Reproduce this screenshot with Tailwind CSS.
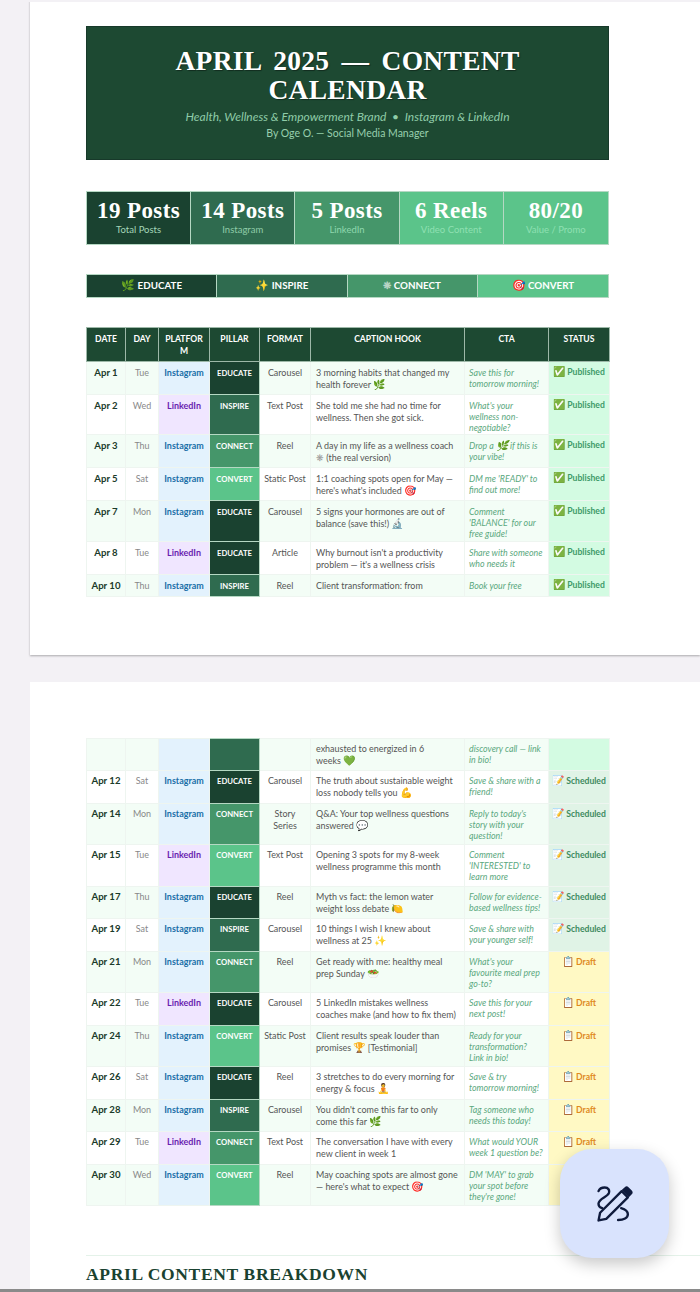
<!DOCTYPE html>
<html lang="en">
<head>
<meta charset="utf-8">
<title>April 2025 Content Calendar</title>
<script src="https://cdn.jsdelivr.net/npm/@tailwindcss/browser@4"></script>
</head>
<body class="relative w-[700px] h-[1292px] overflow-hidden bg-[#f3f1f5] font-['Lato','Noto_Sans',sans-serif]">

<!-- page 1 -->
<section class="ml-[30px] h-[655px] bg-white pl-[56px] pt-[26px] shadow-[0_1px_2px_rgba(0,0,0,0.3)]">
    <header class="w-[523px] h-[134px] bg-[#1d4932] border border-[#17392a] px-8 pt-[19px] text-center">
        <h1 class="font-['Liberation_Serif',serif] font-bold text-[27.5px] leading-[29px] tracking-[0.3px] [word-spacing:5px] text-white [text-shadow:1px_1px_1px_rgba(0,0,0,0.4)]">APRIL 2025 — CONTENT CALENDAR</h1>
        <p class="mt-[5px] text-[12px] leading-[16px] italic text-[#8fcca8]">Health, Wellness &amp; Empowerment Brand &nbsp;•&nbsp; Instagram &amp; LinkedIn</p>
        <p class="text-[10.5px] leading-[16px] text-[#98cfae]">By Oge O. — Social Media Manager</p>
    </header>

    <div class="mt-[31px] w-[523px] h-[54px] grid grid-cols-5 border border-[#b5d8c3] divide-x divide-[#b5d8c3] text-center text-white">
        <div class="bg-[#1a4230] pt-[6px]">
            <p class="font-['Liberation_Serif',serif] font-bold text-[23px] leading-[25px] tracking-[0.4px]">19 Posts</p>
            <p class="text-[9.5px] leading-[13px] text-[#a5d6b9]">Total Posts</p>
        </div>
        <div class="bg-[#2f6b4f] pt-[6px]">
            <p class="font-['Liberation_Serif',serif] font-bold text-[23px] leading-[25px] tracking-[0.4px]">14 Posts</p>
            <p class="text-[9.5px] leading-[13px] text-[#8fcca8]">Instagram</p>
        </div>
        <div class="bg-[#45966a] pt-[6px]">
            <p class="font-['Liberation_Serif',serif] font-bold text-[23px] leading-[25px] tracking-[0.4px]">5 Posts</p>
            <p class="text-[9.5px] leading-[13px] text-[#8fd8ae]">LinkedIn</p>
        </div>
        <div class="bg-[#5bc48a] pt-[6px]">
            <p class="font-['Liberation_Serif',serif] font-bold text-[23px] leading-[25px] tracking-[0.4px]">6 Reels</p>
            <p class="text-[9.5px] leading-[13px] text-[#8fe0b2]">Video Content</p>
        </div>
        <div class="bg-[#5bc48a] pt-[6px]">
            <p class="font-['Liberation_Serif',serif] font-bold text-[23px] leading-[25px] tracking-[0.4px]">80/20</p>
            <p class="text-[9.5px] leading-[13px] text-[#8fe0b2]">Value / Promo</p>
        </div>
    </div>

    <div class="mt-[29px] w-[523px] h-[24px] grid grid-cols-4 border border-[#b5d8c3] divide-x divide-[#b5d8c3] text-center text-white text-[9.8px] leading-[21px] font-bold">
        <div class="bg-[#1a4230]"><span class="text-[11px] leading-none">🌿</span> EDUCATE</div>
        <div class="bg-[#2f6b4f]"><span class="text-[11px] leading-none">✨</span> INSPIRE</div>
        <div class="bg-[#45966a]"><span class="text-[#b9d4c5]">❋</span> CONNECT</div>
        <div class="bg-[#5bc48a]"><span class="text-[11px] leading-none">🎯</span> CONVERT</div>
    </div>

    <table class="mt-[29px] w-[523px] table-fixed border-collapse text-[8.95px] leading-[12px] text-[#555] [&_th]:border [&_th]:border-[#9db8a8] [&_th]:bg-[#1d4932] [&_th]:text-white [&_th]:font-bold [&_th]:align-top [&_th]:pt-[5px] [&_th]:px-[1px] [&_th]:text-[8.6px] [&_th]:leading-[12px] [&_td]:border [&_td]:border-[#eef5f0] [&_td]:align-top [&_td]:pt-[5px] [&_td]:px-[5px] [&_td:nth-child(1)]:font-bold [&_td:nth-child(1)]:text-center [&_td:nth-child(1)]:px-0 [&_td:nth-child(1)]:text-[9.6px] [&_td:nth-child(1)]:text-[#1a3a2a] [&_td:nth-child(2)]:text-center [&_td:nth-child(2)]:px-0 [&_td:nth-child(2)]:text-[#888] [&_td:nth-child(3)]:font-bold [&_td:nth-child(3)]:text-center [&_td:nth-child(3)]:px-0 [&_td:nth-child(4)]:font-bold [&_td:nth-child(4)]:text-center [&_td:nth-child(4)]:px-0 [&_td:nth-child(4)]:text-white [&_td:nth-child(4)]:text-[7.7px] [&_td:nth-child(4)]:border-[#b5d8c3] [&_td:nth-child(5)]:text-center [&_td:nth-child(5)]:px-0 [&_td:nth-child(7)]:italic [&_td:nth-child(7)]:text-[8.8px] [&_td:nth-child(7)]:leading-[11px] [&_td:nth-child(7)]:text-[#5aa87e] [&_td:nth-child(7)]:px-[4px] [&_td:nth-child(8)]:font-bold [&_td:nth-child(8)]:px-0 [&_td:nth-child(8)]:pt-[4px] [&_td:nth-child(8)]:text-center [&_td:nth-child(8)]:text-[8.6px] [&_td:nth-child(8)]:whitespace-nowrap">
        <colgroup>
            <col class="w-[39px]"><col class="w-[33px]"><col class="w-[51px]"><col class="w-[50px]"><col class="w-[51px]"><col class="w-[154px]"><col class="w-[84px]"><col class="w-[61px]">
        </colgroup>
        <thead>
            <tr class="h-[34px]"><th>DATE</th><th>DAY</th><th>PLATFOR<br>M</th><th>PILLAR</th><th>FORMAT</th><th>CAPTION HOOK</th><th>CTA</th><th>STATUS</th></tr>
        </thead>
        <tbody>
            <tr class="h-[33px] bg-[#f3fdf6]"><td>Apr 1</td><td>Tue</td><td class="bg-[#e3f2fd] text-[#1a6fa8]">Instagram</td><td class="bg-[#1a4230]">EDUCATE</td><td>Carousel</td><td>3 morning habits that changed my health forever <span class="text-[10px] leading-none">🌿</span></td><td>Save this for tomorrow morning!</td><td class="bg-[#d3fbe2] text-[#3d9a68]"><span class="text-[10px] leading-none">✅</span> Published</td></tr>
            <tr class="h-[40px] bg-white"><td>Apr 2</td><td>Wed</td><td class="bg-[#f0e6ff] text-[#6a1fb0]">LinkedIn</td><td class="bg-[#2f6b4f]">INSPIRE</td><td>Text Post</td><td>She told me she had no time for wellness. Then she got sick.</td><td>What's your wellness non-negotiable?</td><td class="bg-[#d3fbe2] text-[#3d9a68]"><span class="text-[10px] leading-none">✅</span> Published</td></tr>
            <tr class="h-[33px] bg-[#f3fdf6]"><td>Apr 3</td><td>Thu</td><td class="bg-[#e3f2fd] text-[#1a6fa8]">Instagram</td><td class="bg-[#45966a]">CONNECT</td><td>Reel</td><td>A day in my life as a wellness coach <span class="text-[#999]">❋</span> (the real version)</td><td>Drop a <span class="text-[10px] leading-none">🌿</span> if this is your vibe!</td><td class="bg-[#d3fbe2] text-[#3d9a68]"><span class="text-[10px] leading-none">✅</span> Published</td></tr>
            <tr class="h-[33px] bg-white"><td>Apr 5</td><td>Sat</td><td class="bg-[#e3f2fd] text-[#1a6fa8]">Instagram</td><td class="bg-[#5bc48a]">CONVERT</td><td>Static Post</td><td>1:1 coaching spots open for May — here's what's included <span class="text-[10px] leading-none">🎯</span></td><td>DM me 'READY' to find out more!</td><td class="bg-[#d3fbe2] text-[#3d9a68]"><span class="text-[10px] leading-none">✅</span> Published</td></tr>
            <tr class="h-[41px] bg-[#f3fdf6]"><td>Apr 7</td><td>Mon</td><td class="bg-[#e3f2fd] text-[#1a6fa8]">Instagram</td><td class="bg-[#1a4230]">EDUCATE</td><td>Carousel</td><td>5 signs your hormones are out of balance (save this!) <span class="text-[10px] leading-none">🔬</span></td><td>Comment 'BALANCE' for our free guide!</td><td class="bg-[#d3fbe2] text-[#3d9a68]"><span class="text-[10px] leading-none">✅</span> Published</td></tr>
            <tr class="h-[33px] bg-white"><td>Apr 8</td><td>Tue</td><td class="bg-[#f0e6ff] text-[#6a1fb0]">LinkedIn</td><td class="bg-[#1a4230]">EDUCATE</td><td>Article</td><td>Why burnout isn't a productivity problem — it's a wellness crisis</td><td>Share with someone who needs it</td><td class="bg-[#d3fbe2] text-[#3d9a68]"><span class="text-[10px] leading-none">✅</span> Published</td></tr>
            <tr class="h-[22px] bg-[#f3fdf6]"><td>Apr 10</td><td>Thu</td><td class="bg-[#e3f2fd] text-[#1a6fa8]">Instagram</td><td class="bg-[#2f6b4f]">INSPIRE</td><td>Reel</td><td>Client transformation: from</td><td>Book your free</td><td class="bg-[#d3fbe2] text-[#3d9a68]"><span class="text-[10px] leading-none">✅</span> Published</td></tr>
        </tbody>
    </table>
</section>

<!-- page 2 -->
<section class="ml-[30px] mt-[27px] h-[607px] bg-white pl-[56px] pt-[56px]">
    <table class="w-[523px] table-fixed border-collapse text-[8.95px] leading-[12px] text-[#555] [&_td]:border [&_td]:border-[#eef5f0] [&_td]:align-top [&_td]:pt-[4px] [&_td]:px-[5px] [&_td:nth-child(1)]:font-bold [&_td:nth-child(1)]:text-center [&_td:nth-child(1)]:px-0 [&_td:nth-child(1)]:text-[9.6px] [&_td:nth-child(1)]:text-[#1a3a2a] [&_td:nth-child(2)]:text-center [&_td:nth-child(2)]:px-0 [&_td:nth-child(2)]:text-[#888] [&_td:nth-child(3)]:font-bold [&_td:nth-child(3)]:text-center [&_td:nth-child(3)]:px-0 [&_td:nth-child(4)]:font-bold [&_td:nth-child(4)]:text-center [&_td:nth-child(4)]:px-0 [&_td:nth-child(4)]:text-white [&_td:nth-child(4)]:text-[7.7px] [&_td:nth-child(4)]:border-[#b5d8c3] [&_td:nth-child(5)]:text-center [&_td:nth-child(5)]:px-0 [&_td:nth-child(7)]:italic [&_td:nth-child(7)]:text-[8.8px] [&_td:nth-child(7)]:leading-[11px] [&_td:nth-child(7)]:text-[#5aa87e] [&_td:nth-child(7)]:px-[4px] [&_td:nth-child(8)]:font-bold [&_td:nth-child(8)]:px-0 [&_td:nth-child(8)]:text-center [&_td:nth-child(8)]:text-[8.6px] [&_td:nth-child(8)]:whitespace-nowrap">
        <colgroup>
            <col class="w-[39px]"><col class="w-[33px]"><col class="w-[51px]"><col class="w-[50px]"><col class="w-[51px]"><col class="w-[154px]"><col class="w-[84px]"><col class="w-[61px]">
        </colgroup>
        <tbody>
            <tr class="h-[32px] bg-[#f3fdf6]"><td></td><td></td><td class="bg-[#e3f2fd]"></td><td class="bg-[#2f6b4f]"></td><td></td><td>exhausted to energized in 6<br>weeks <span class="text-[10px] leading-none">💚</span></td><td>discovery call — link in bio!</td><td class="bg-[#d3fbe2]"></td></tr>
            <tr class="h-[33px] bg-white"><td>Apr 12</td><td>Sat</td><td class="bg-[#e3f2fd] text-[#1a6fa8]">Instagram</td><td class="bg-[#1a4230]">EDUCATE</td><td>Carousel</td><td>The truth about sustainable weight loss nobody tells you <span class="text-[10px] leading-none">💪</span></td><td>Save &amp; share with a friend!</td><td class="bg-[#e0f3e6] text-[#3d8a5f]"><span class="text-[10px] leading-none">📝</span> Scheduled</td></tr>
            <tr class="h-[41px] bg-[#f3fdf6]"><td>Apr 14</td><td>Mon</td><td class="bg-[#e3f2fd] text-[#1a6fa8]">Instagram</td><td class="bg-[#45966a]">CONNECT</td><td>Story<br>Series</td><td>Q&amp;A: Your top wellness questions answered <span class="text-[10px] leading-none">💬</span></td><td>Reply to today's story with your question!</td><td class="bg-[#e0f3e6] text-[#3d8a5f]"><span class="text-[10px] leading-none">📝</span> Scheduled</td></tr>
            <tr class="h-[42px] bg-white"><td>Apr 15</td><td>Tue</td><td class="bg-[#f0e6ff] text-[#6a1fb0]">LinkedIn</td><td class="bg-[#5bc48a]">CONVERT</td><td>Text Post</td><td>Opening 3 spots for my 8-week wellness programme this month</td><td>Comment 'INTERESTED' to learn more</td><td class="bg-[#e0f3e6] text-[#3d8a5f]"><span class="text-[10px] leading-none">📝</span> Scheduled</td></tr>
            <tr class="h-[32px] bg-[#f3fdf6]"><td>Apr 17</td><td>Thu</td><td class="bg-[#e3f2fd] text-[#1a6fa8]">Instagram</td><td class="bg-[#1a4230]">EDUCATE</td><td>Reel</td><td>Myth vs fact: the lemon water weight loss debate <span class="text-[10px] leading-none">🍋</span></td><td>Follow for evidence-based wellness tips!</td><td class="bg-[#e0f3e6] text-[#3d8a5f]"><span class="text-[10px] leading-none">📝</span> Scheduled</td></tr>
            <tr class="h-[33px] bg-white"><td>Apr 19</td><td>Sat</td><td class="bg-[#e3f2fd] text-[#1a6fa8]">Instagram</td><td class="bg-[#2f6b4f]">INSPIRE</td><td>Carousel</td><td>10 things I wish I knew about wellness at 25 <span class="text-[10px] leading-none">✨</span></td><td>Save &amp; share with your younger self!</td><td class="bg-[#e0f3e6] text-[#3d8a5f]"><span class="text-[10px] leading-none">📝</span> Scheduled</td></tr>
            <tr class="h-[41px] bg-[#f3fdf6]"><td>Apr 21</td><td>Mon</td><td class="bg-[#e3f2fd] text-[#1a6fa8]">Instagram</td><td class="bg-[#45966a]">CONNECT</td><td>Reel</td><td>Get ready with me: healthy meal prep Sunday <span class="text-[10px] leading-none">🥗</span></td><td>What's your favourite meal prep go-to?</td><td class="bg-[#fff9c4] text-[#e08a1e]"><span class="text-[10px] leading-none">📋</span> Draft</td></tr>
            <tr class="h-[33px] bg-white"><td>Apr 22</td><td>Tue</td><td class="bg-[#f0e6ff] text-[#6a1fb0]">LinkedIn</td><td class="bg-[#1a4230]">EDUCATE</td><td>Carousel</td><td>5 LinkedIn mistakes wellness coaches make (and how to fix them)</td><td>Save this for your next post!</td><td class="bg-[#fff9c4] text-[#e08a1e]"><span class="text-[10px] leading-none">📋</span> Draft</td></tr>
            <tr class="h-[41px] bg-[#f3fdf6]"><td>Apr 24</td><td>Thu</td><td class="bg-[#e3f2fd] text-[#1a6fa8]">Instagram</td><td class="bg-[#5bc48a]">CONVERT</td><td>Static Post</td><td>Client results speak louder than promises <span class="text-[10px] leading-none">🏆</span> [Testimonial]</td><td>Ready for your transformation? Link in bio!</td><td class="bg-[#fff9c4] text-[#e08a1e]"><span class="text-[10px] leading-none">📋</span> Draft</td></tr>
            <tr class="h-[33px] bg-white"><td>Apr 26</td><td>Sat</td><td class="bg-[#e3f2fd] text-[#1a6fa8]">Instagram</td><td class="bg-[#1a4230]">EDUCATE</td><td>Reel</td><td>3 stretches to do every morning for energy &amp; focus <span class="text-[10px] leading-none">🧘</span></td><td>Save &amp; try tomorrow morning!</td><td class="bg-[#fff9c4] text-[#e08a1e]"><span class="text-[10px] leading-none">📋</span> Draft</td></tr>
            <tr class="h-[32px] bg-[#f3fdf6]"><td>Apr 28</td><td>Mon</td><td class="bg-[#e3f2fd] text-[#1a6fa8]">Instagram</td><td class="bg-[#2f6b4f]">INSPIRE</td><td>Carousel</td><td>You didn't come this far to only come this far <span class="text-[10px] leading-none">🌿</span></td><td>Tag someone who needs this today!</td><td class="bg-[#fff9c4] text-[#e08a1e]"><span class="text-[10px] leading-none">📋</span> Draft</td></tr>
            <tr class="h-[33px] bg-white"><td>Apr 29</td><td>Tue</td><td class="bg-[#f0e6ff] text-[#6a1fb0]">LinkedIn</td><td class="bg-[#45966a]">CONNECT</td><td>Text Post</td><td>The conversation I have with every new client in week 1</td><td>What would YOUR<br>week 1 question be?</td><td class="bg-[#fff9c4] text-[#e08a1e]"><span class="text-[10px] leading-none">📋</span> Draft</td></tr>
            <tr class="h-[41px] bg-[#f3fdf6]"><td>Apr 30</td><td>Wed</td><td class="bg-[#e3f2fd] text-[#1a6fa8]">Instagram</td><td class="bg-[#5bc48a]">CONVERT</td><td>Reel</td><td>May coaching spots are almost gone — here's what to expect <span class="text-[10px] leading-none">🎯</span></td><td>DM 'MAY' to grab your spot before they're gone!</td><td class="bg-[#fff9c4] text-[#e08a1e]"><span class="text-[10px] leading-none">📋</span> Draft</td></tr>
        </tbody>
    </table>
    <div class="mt-[49px] border-t border-[#e4f2e9] pt-[8px]">
        <h2 class="font-['Liberation_Serif',serif] font-bold text-[17.5px] leading-[20px] tracking-[0.65px] text-[#1a4230]">APRIL CONTENT BREAKDOWN</h2>
    </div>
</section>

<div class="absolute left-0 right-0 top-0 h-[2px] bg-[#f3f1f5]"></div>
<div class="absolute left-0 right-0 bottom-0 h-[3px] bg-[#8a8a8a]"></div>

<!-- floating button -->
<button class="absolute left-[560px] top-[1149px] w-[109px] h-[109px] rounded-[32px] bg-[#d9e3fd] shadow-[0_6px_16px_rgba(0,0,0,0.22)] flex items-center justify-center">
    <svg class="w-[36px] h-[36px] text-[#0f1b3d]" viewBox="0 0 35 35" fill="none" stroke="currentColor" stroke-width="2.3" stroke-linecap="round" stroke-linejoin="round">
        <path d="M1.5 33.5 L3 26 L24 5 L30 11 L9 32 Z"/>
        <path fill="currentColor" stroke="none" d="M24 4 L27 1.2 a2.6 2.6 0 0 1 3.6 0 l3.2 3.2 a2.6 2.6 0 0 1 0 3.6 L31 11 Z"/>
        <path d="M1.5 5 C2.5 2.5 5 1.5 7.5 1.5 C11 1.5 12.5 4 11.5 7 C10 11 2 12 1.5 17 C1.3 19.5 3 21 5 21.5"/>
        <path d="M23.5 21.5 C27 22.5 30 24 30 27.5 C30 31 26 33 20.5 33"/>
    </svg>
</button>
</body>
</html>
